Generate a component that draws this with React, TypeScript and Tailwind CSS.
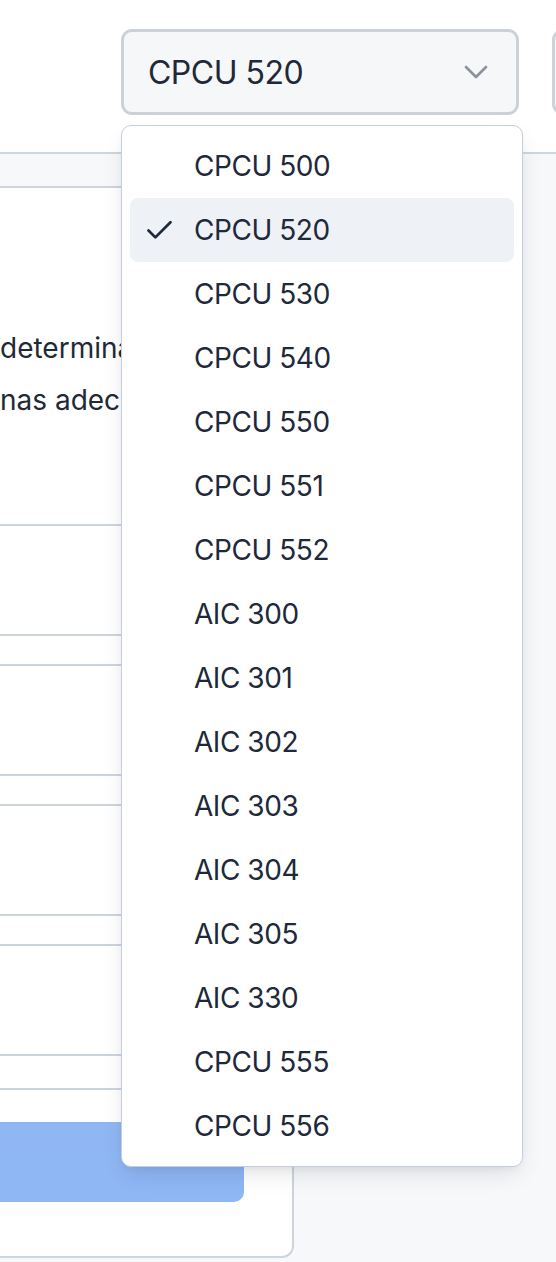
import React from "react";

const options = [
  "CPCU 500",
  "CPCU 520",
  "CPCU 530",
  "CPCU 540",
  "CPCU 550",
  "CPCU 551",
  "CPCU 552",
  "AIC 300",
  "AIC 301",
  "AIC 302",
  "AIC 303",
  "AIC 304",
  "AIC 305",
  "AIC 330",
  "CPCU 555",
  "CPCU 556",
];

function ChevronDown() {
  return (
    <svg width="40" height="40" viewBox="0 0 24 24" fill="none" stroke="#8b929c" strokeWidth="1.6" strokeLinecap="round" strokeLinejoin="round">
      <path d="m6 9 6 6 6-6" />
    </svg>
  );
}

function Check() {
  return (
    <svg width="33" height="33" viewBox="0 0 24 24" fill="none" stroke="#1e293b" strokeWidth="2" strokeLinecap="round" strokeLinejoin="round">
      <path d="M20 6 9 17l-5-5" />
    </svg>
  );
}

export default function App() {
  const selected = "CPCU 520";
  return (
    <div
      className="w-full min-h-screen overflow-hidden bg-[#f7f8fa] text-[#1e293b]"
      style={{ fontFamily: "Inter, 'Noto Sans', sans-serif" }}
    >
      <header className="h-[154px] bg-white border-b-2 border-[#cdd5e0]">
        <div className="flex gap-[33px] pl-[121px] pt-[29px]">
          <div className="relative shrink-0">
            <button className="flex h-[86px] w-[398px] items-center justify-between rounded-[11px] border-[3px] border-[#cdd1d8] bg-[#f6f7f9] pl-[24px] pr-[20px]">
              <span className="pt-[2px] text-[32px] tracking-[-0.016em] text-[#1f2937]">{selected}</span>
              <ChevronDown />
            </button>
            <ul className="absolute left-0 top-[96px] z-10 w-[402px] rounded-[10px] border border-[#c5cfdc] bg-white p-[8px] shadow-[0_10px_25px_-5px_rgba(15,23,42,0.12),0_4px_10px_-4px_rgba(15,23,42,0.08)]">
              {options.map((o) => (
                <li
                  key={o}
                  className={
                    "flex h-[64px] items-center rounded-[8px] pl-[13px] " +
                    (o === selected ? "bg-[#eef1f6]" : "")
                  }
                >
                  <span className="flex w-[33px] shrink-0 items-center justify-center">
                    {o === selected ? <Check /> : null}
                  </span>
                  <span className="ml-[18px] text-[28px] tracking-[-0.016em] text-[#1e293b]">{o}</span>
                </li>
              ))}
            </ul>
          </div>
          <div className="h-[86px] w-[398px] shrink-0 rounded-[11px] border-[3px] border-[#cdd1d8] bg-[#f6f7f9]" />
        </div>
      </header>

      <main className="pt-[32px]">
        <section className="ml-[-300px] w-[594px] overflow-hidden rounded-[12px] border-2 border-[#cbd4df] bg-white">
          <div className="px-[48px] pt-[134px] pb-[32px]">
            <div className="pl-[250px] text-[28px] leading-[52px] text-[#1f2937] whitespace-nowrap">
              <p>determinar</p>
              <p>nas adecuadas</p>
            </div>
            <div className="mt-[98px] flex flex-col gap-[28px]">
              <div className="h-[112px] rounded-[10px] border-2 border-[#cbd4df]" />
              <div className="h-[112px] rounded-[10px] border-2 border-[#cbd4df]" />
              <div className="h-[112px] rounded-[10px] border-2 border-[#cbd4df]" />
              <div className="h-[112px] rounded-[10px] border-2 border-[#cbd4df]" />
            </div>
          </div>
          <div className="border-t-2 border-[#cbd4df] px-[48px] pt-[32px] pb-[48px]">
            <button className="h-[80px] w-full rounded-[10px] bg-[#8eb7f4]" />
          </div>
        </section>
      </main>
    </div>
  );
}
